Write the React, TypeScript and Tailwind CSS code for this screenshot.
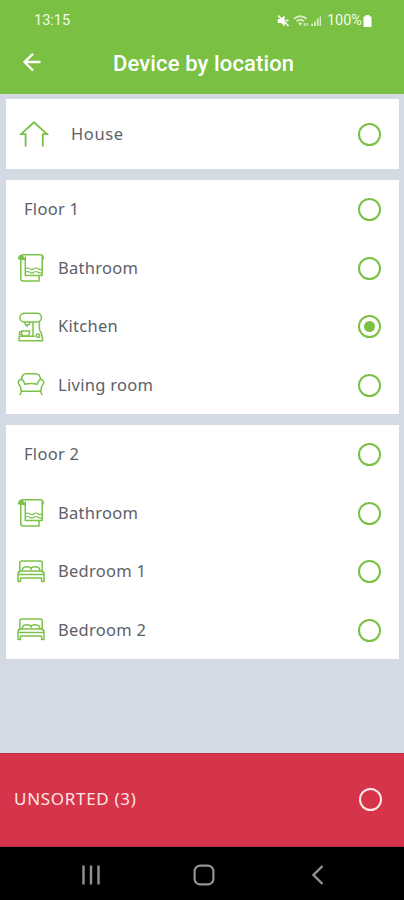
import React from 'react';

type IconName = 'bath' | 'kitchen' | 'sofa' | 'bed';

function HouseIcon() {
  return (
    <svg className="h-[28px] w-[30px]" viewBox="0 0 30 28" fill="none" stroke="#79c043" strokeWidth="1.8">
      <path d="M6.6 26.5V14.2H2L15 2.3L28 14.2H23.8V26.5" />
    </svg>
  );
}

function RoomIcon({ name }: { name: IconName }) {
  return (
    <svg className="h-[30px] w-[28px] shrink-0" viewBox="0 0 28 30" fill="none" stroke="#7cc24a" strokeWidth="1.5" strokeLinejoin="round" strokeLinecap="round">
      {name === 'bath' && (
        <>
          <path d="M1.5 5.5C2.2 3 4 1.8 6.5 1.8H23.6C25.3 1.8 26.2 3 26.4 5.8" />
          <path d="M8.3 4V22.5H25.2V3.5" />
          <path d="M3.8 5V25.8Q3.8 28 6 28H22V22.8" />
          <path d="M1.8 5.8L5 2.4L7.6 6.5Z" fill="#7cc24a" />
          <path d="M8.5 15.8q2-1.6 4.2 0t4.2 0t4.2 0t4 0M8.5 19.3q2-1.6 4.2 0t4.2 0t4.2 0t4 0" strokeWidth="1.1" />
        </>
      )}
      {name === 'kitchen' && (
        <>
          <rect x="3" y="1.2" width="21.4" height="8.8" rx="4.2" />
          <path d="M7.5 10.3L8.5 12.8H12L13 10.3M10.2 13V14.5" />
          <path d="M16 10.3V24M22.4 9.8V16.5Q22.4 18.5 24.2 20.5L25.8 28.7H2V25.5Q2 24.3 3.5 24.3H17.5" />
          <path d="M4.5 19H12.5V21.3Q12.5 23.3 10.5 24H6Q4.5 22.8 4.5 19M4.5 20H2.5V22.8H5" />
          <circle cx="21" cy="23.8" r="1.7" />
        </>
      )}
      {name === 'sofa' && (
        <>
          <path d="M4.4 9.2C4.8 5.8 6.8 3.8 9.5 3.8H18.5C21.2 3.8 23.2 5.8 23.6 9.2" />
          <path d="M8 14.2L5.8 10.2Q4.6 8.8 2.8 9.8Q.8 11.2 1.4 13.4L3.6 17.2L4.2 21.3H23.8L24.4 17.2L26.6 13.4Q27.2 11.2 25.2 9.8Q23.4 8.8 22.2 10.2L20 14.2" />
          <path d="M8 14.2Q14 12.8 20 14.2M4.6 21.3L3 24.8M23.4 21.3L25 24.8" />
        </>
      )}
      {name === 'bed' && (
        <>
          <path d="M2.8 15V6Q2.8 4 4.8 4H23.2Q25.2 4 25.2 6V15" />
          <path d="M5 13.3L6.3 10.6Q10 9 13.5 10.6L14 12.2L14.5 10.6Q18 9 21.7 10.6L23 13.3" />
          <path d="M4 14H24Q27 14 27 17V24.5H24.6V21.1H3.4V24.5H1V17Q1 14 4 14ZM1.2 17.6H26.8" />
        </>
      )}
    </svg>
  );
}

function Radio({ checked = false, white = false }: { checked?: boolean; white?: boolean }) {
  return (
    <span className={`flex size-[23px] shrink-0 items-center justify-center rounded-full border-2 ${white ? 'border-[#fde8e8]' : 'border-[#79c043]'}`}>
      {checked && <span className="size-[11px] rounded-full bg-[#79c043]" />}
    </span>
  );
}

function Row({ label, icon, checked }: { label: string; icon?: IconName; checked?: boolean }) {
  return (
    <div className={`flex h-[58.5px] items-center pt-px pr-[18px] ${icon ? 'pl-[11px]' : 'pl-[17px]'}`}>
      {icon && <RoomIcon name={icon} />}
      <span className={`flex-1 whitespace-nowrap text-[16.5px] tracking-[0.28px] ${icon ? 'pl-[13px]' : 'pl-px'}`}>{label}</span>
      <Radio checked={checked} />
    </div>
  );
}

function StatusIcons() {
  return (
    <svg className="h-[14px] w-[46px]" viewBox="0 0 46 14" fill="#fff">
      <path d="M.8 5H3.5L7.6 1.5V12.5L4.3 9H.8Z" />
      <path d="M1 1.5L11.5 12M8.5 6.5H11.5" stroke="#fff" strokeWidth="1.7" />
      <g opacity=".7">
        <path d="M17 4.8Q23.3-.4 29.6 4.8M19.4 7.4Q23.3 4.2 27.2 7.4" fill="none" stroke="#fff" strokeWidth="1.8" />
        <path d="M21.2 8.9Q23.3 7.4 25.4 8.9L23.3 12ZM26.8 9h1.4v3h-1.4zM29.4 9h1.4v3h-1.4z" />
        <path d="M34.2 9.5h1.8V12h-1.8zM37 7.3h1.8V12H37zM39.8 4.6h1.8V12h-1.8zM42.6 2.4h1.4V12h-1.4z" />
      </g>
    </svg>
  );
}

export default function App() {
  return (
    <div className="flex h-[900px] w-[404px] flex-col overflow-hidden bg-[#d4dae3] font-['Noto_Sans',sans-serif] text-[#5d6069]">
      <header className="flex h-[94px] shrink-0 flex-col bg-[#79c043] font-[Roboto,sans-serif] text-white">
        <div className="flex h-[40px] items-center pt-px pr-[32px] pl-[34px] text-[14.5px]">
          <span className="flex-1 text-[#f4fbea]">13:15</span>
          <StatusIcons />
          <span className="ml-[4px] text-[#f4fbea]">100%</span>
          <svg className="ml-px h-[12px] w-[9px]" viewBox="0 0 9 12" fill="#fff"><path d="M2.6 0h3.8v1.4H8.5V12H.5V1.4h2.1z" /></svg>
        </div>
        <div className="flex h-[46px] items-center pl-[22px]">
          <svg className="h-[20px] w-[20px]" viewBox="0 0 20 20" fill="none" stroke="#fff" strokeWidth="2.3"><path d="M18.5 9H2.5M11 .8L2.5 9L11 17.5" /></svg>
          <h1 className="ml-[71px] whitespace-nowrap text-[22px] font-medium tracking-[0.13px]">Device by location</h1>
        </div>
      </header>
      <main className="flex flex-1 flex-col gap-[11px] pt-[5px] pr-[5px] pl-[6px]">
        <section className="flex h-[70px] items-center bg-white pr-[18px] pl-[13px]">
          <HouseIcon />
          <span className="flex-1 pl-[22px] text-[16.5px] tracking-[0.6px]">House</span>
          <Radio />
        </section>
        <section className="bg-white">
          <Row label="Floor 1" />
          <Row label="Bathroom" icon="bath" />
          <Row label="Kitchen" icon="kitchen" checked />
          <Row label="Living room" icon="sofa" />
        </section>
        <section className="bg-white">
          <Row label="Floor 2" />
          <Row label="Bathroom" icon="bath" />
          <Row label="Bedroom 1" icon="bed" />
          <Row label="Bedroom 2" icon="bed" />
        </section>
      </main>
      <footer className="flex h-[94px] shrink-0 items-center border-y border-[#b62f45] bg-[#d5344b] pr-[22px] pb-[2px] pl-[14px] text-[#ffe6e2]">
        <span className="flex-1 text-[17px] tracking-[0.7px]">UNSORTED (3)</span>
        <Radio white />
      </footer>
      <nav className="flex h-[53px] shrink-0 items-center justify-between bg-black pt-[2px] pr-[78px] pl-[81px]">
        <svg className="h-[20px] w-[20px]" viewBox="0 0 20 20" stroke="#929292" strokeWidth="2.4"><path d="M2.5 .5V19.5M10 .5V19.5M17.5 .5V19.5" /></svg>
        <svg className="mr-[3px] h-[22px] w-[22px]" viewBox="0 0 22 22" fill="none" stroke="#929292" strokeWidth="2.2"><rect x="1.6" y="1.6" width="18.8" height="18.8" rx="5.5" /></svg>
        <svg className="h-[22px] w-[16px]" viewBox="0 0 16 22" fill="none" stroke="#929292" strokeWidth="2.4"><path d="M12.5 2L3.5 11L12.5 20" /></svg>
      </nav>
    </div>
  );
}
